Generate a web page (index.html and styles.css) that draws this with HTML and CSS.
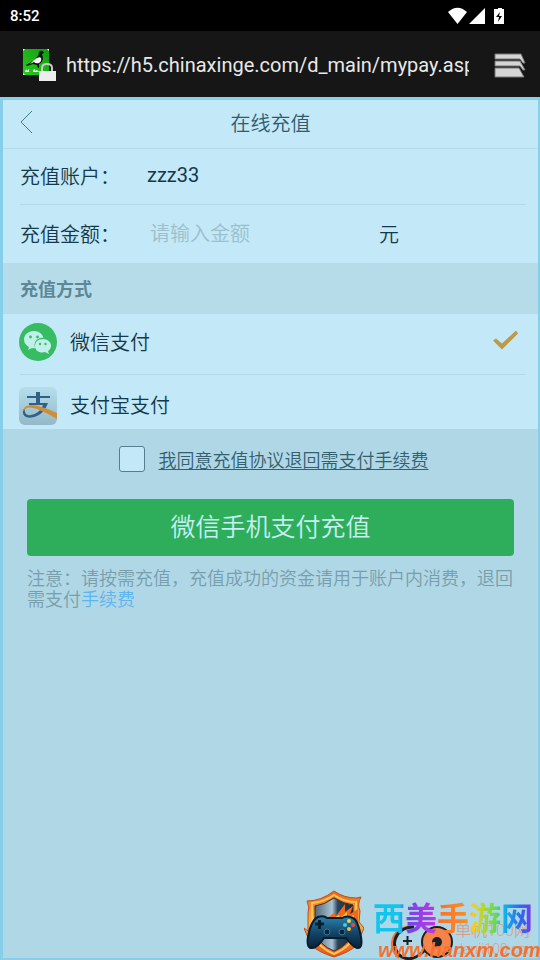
FILE: index.html
```html
<!DOCTYPE html>
<html lang="zh-CN">
<head>
  <meta charset="UTF-8">
  <meta name="viewport" content="width=device-width, initial-scale=1.0">
  <title>在线充值</title>
  <link rel="stylesheet" href="styles.css">
</head>
<body>
  <div class="status-bar">
    <span class="clock">8:52</span>
    <svg class="status-icons" viewBox="0 0 60 18" width="60" height="18" aria-hidden="true">
      <path fill="#fff" d="M0 5Q9.500 -3.500 19 5L9.500 17ZM21 17L37 1V17Z"/>
      <path fill="#fff" d="M48 2H50V1H54V2H56V17H46V2Z"/>
      <path fill="#000" d="M52 5L48 10H51L50 15L54 9H51Z"/>
    </svg>
  </div>

  <div class="address-bar">
    <svg class="favicon" viewBox="0 0 34 34" width="34" height="34" aria-hidden="true">
      <defs><linearGradient id="grass" x1="1" y1="0" x2="0" y2="1"><stop stop-color="#149a12"/><stop offset="1" stop-color="#27cc1d"/></linearGradient></defs>
      <rect x="1" y="1" width="26" height="26" fill="url(#grass)"/>
      <path fill="#fff" d="M1 1H3L1 3ZM25 1H27V3ZM1 25V27H3ZM4 21L5 23L7 21L7 24H3ZM11 22L13 21V23L15 22L17 24H11Z"/>
      <path fill="#0b170c" d="M17 4Q18 2 21 3L22 5L20 6Q21 9 21 11Q20 15 17 16L17 20H16L15 17L11 16L5 18L4 17L11 13L15 9Q17 7 17 4Z"/>
      <path fill="#fff" d="M12 12Q17 8 19 10Q20 13 17 15Q14 16 12 14L8 16Z"/>
      <path fill="none" stroke="#c5c9c8" stroke-width="2" d="M20 24V20Q20 16 25 16Q30 16 30 20V24"/>
      <path fill="#ededed" d="M17 23H34V33H17Z"/>
    </svg>
    <span class="url">https://h5.chinaxinge.com/d_main/mypay.asp</span>
    <button class="tabs" type="button" aria-label="标签页">
      <svg viewBox="0 0 32 25" width="32" height="25">
        <path fill="#d5d5d5" stroke="#777" d="M1 1H27L31 10H29L26 6H1ZM1 8H26L31 17H29L26 13H1ZM1 15H25L30 24H1Z"/>
      </svg>
    </button>
  </div>

  <main class="page">
    <header class="title-bar">
      <a class="back" href="#" aria-label="返回">
        <svg viewBox="0 0 14 24" width="14" height="24"><path fill="none" stroke="#47788a" d="M12 1L1 12L12 23"/></svg>
      </a>
      <h1>在线充值</h1>
    </header>

    <form>
      <div class="panel">
        <div class="row account">
          <span class="label">充值账户：</span>
          <span class="value">zzz33</span>
        </div>
        <div class="row amount">
          <label class="label" for="money">充值金额：</label>
          <input class="money" id="money" type="text" placeholder="请输入金额">
          <span>元</span>
        </div>
      </div>

      <h2 class="section-title">充值方式</h2>

      <div class="panel">
        <label class="row method">
          <svg class="pay-icon" viewBox="0 0 38 38" width="38" height="38" aria-hidden="true">
            <circle cx="19" cy="19" r="19" fill="#36bc62"/>
            <path fill="#c1f0ea" d="M15 8C9 8 5 12 5 16.500Q5 21 10 24L9 27L13 25Q14 25.500 16 25Q14 18 20 15.500Q22 14.500 24.500 15C23.500 11 20 8 15 8Z"/>
            <path fill="#c1f0ea" d="M24 16C19 16 16 19 16 23C16 27 19 29.500 23.500 29.500L26 29L30 31L29 28Q32 26 32 22.500C32 19 28.500 16 24 16Z"/>
            <g fill="#36bc62"><circle cx="11.500" cy="14" r="1.400"/><circle cx="18.500" cy="14" r="1.400"/><circle cx="21" cy="21" r="1.200"/><circle cx="26.500" cy="21" r="1.200"/></g>
          </svg>
          <span class="name">微信支付</span>
          <input type="radio" name="method" value="wechat" checked>
        </label>
        <label class="row method">
          <svg class="pay-icon" viewBox="0 0 38 38" width="38" height="38" aria-hidden="true">
            <defs><linearGradient id="tile" x2="0" y2="1"><stop stop-color="#b5deeb"/><stop offset="1" stop-color="#93b9c9"/></linearGradient></defs>
            <rect width="38" height="38" rx="6" fill="url(#tile)"/>
            <path fill="#315f87" d="M17 5H21V9H31V11H21V16H29Q26 24 20 28Q13 32 7 30Q3 28 4 23L6 21Q5 27 9 28Q14 29 19 25Q23 22 24 18H10V16H17V11H8V9H17Z"/>
            <path fill="#cf8e35" d="M4 24Q5 18 13 18Q20 18 38 26V32Q28 26 18 22Q7 18 5 24Z"/>
          </svg>
          <span class="name">支付宝支付</span>
          <input type="radio" name="method" value="alipay">
        </label>
      </div>

      <div class="agreement">
        <input id="agree" type="checkbox" aria-label="我同意充值协议">
        <a href="#">我同意充值协议退回需支付手续费</a>
      </div>

      <button class="submit" type="submit">微信手机支付充值</button>
      <p class="notice">注意：请按需充值，充值成功的资金请用于账户内消费，退回需支付<a href="#">手续费</a></p>
    </form>
  </main>

  <div class="watermark">
    <svg class="badge" viewBox="0 0 60 70" width="60" height="70" aria-hidden="true">
      <defs>
        <linearGradient id="flame" x2="0" y2="1"><stop stop-color="#e9661c"/><stop offset=".5" stop-color="#ffb43c"/><stop offset="1" stop-color="#e4511b"/></linearGradient>
        <linearGradient id="pad" x2="0" y2="1"><stop stop-color="#2684b1"/><stop offset=".5" stop-color="#154769"/><stop offset="1" stop-color="#0a2036"/></linearGradient>
        <linearGradient id="steel"><stop stop-color="#53697a"/><stop offset=".45" stop-color="#a9c4d3"/><stop offset=".6" stop-color="#27435a"/><stop offset="1" stop-color="#172f43"/></linearGradient>
      </defs>
      <path fill="url(#flame)" stroke="#c34a1c" d="M30 2Q40 9 52 9L57 8Q53 15 56 22L55 33L60 39L53 56Q46 63 30 68Q14 63 7 56L0 39L4 42L4 24Q6 18 3 12Q17 12 30 2Z"/>
      <path fill="none" stroke="#ffc554" stroke-width="2" d="M30 6Q40 13 52 13V43Q47 58 30 65Q13 58 8 43V14Q20 13 30 6Z"/>
      <path fill="url(#steel)" stroke="#3c2b2b" d="M30 9Q40 15 49 16V43Q45 56 30 62Q15 56 11 43V17Q20 16 30 9Z"/>
      <path fill="#f2671b" d="M22 30L30 24L32 27L41 15V23L49 17L46 25L54 20V34H20Z"/>
      <path fill="#ffc13b" d="M28 30L35 26L36 29L43 23V29L50 26V34H26Z"/>
      <path fill="url(#pad)" stroke="#061d32" stroke-width="2" d="M14 28Q20 26 23 29H38Q43 26 49 29Q54 31 57 48Q59 60 53 59Q49 58 42 49H20Q14 58 9 59Q2 60 4 48Q7 31 14 28Z"/>
      <path stroke="#071e32" stroke-width="3" d="M11 35H20M15.500 31V40"/>
      <g fill="#0c253b" stroke="#337b9e"><circle cx="23" cy="43" r="3"/><circle cx="38" cy="43" r="3"/></g>
      <circle cx="45" cy="32" r="2" fill="#ffcf37"/><circle cx="49" cy="36" r="2" fill="#f24a3a"/><circle cx="45" cy="40" r="2" fill="#efbd34"/><circle cx="41" cy="36" r="2" fill="#52c5d4"/>
    </svg>
    <div class="brand">
      <div class="old-mark">
        <svg viewBox="0 0 66 40" width="66" height="40" aria-hidden="true">
          <path fill="none" stroke="#f57332" stroke-width="2" d="M22 4C2 6 -3 26 10 36"/>
          <path fill="none" stroke="#172127" stroke-width="3" d="M25 5C4 5 0 27 13 35Q23 40 34 30L40 24"/>
          <path stroke="#172127" stroke-width="2" d="M14 19H23M18.500 14V23"/>
          <circle cx="48" cy="20" r="15" fill="#f5834a" stroke="#172127" stroke-width="2"/>
          <circle cx="48" cy="20" r="5" fill="#172127"/>
        </svg>
        <span>单机100网<br><small>danji100.com</small></span>
      </div>
      <div class="site-name">西美手游网</div>
      <div class="site-url">www.hanxm.com</div>
    </div>
  </div>
</body>
</html>
```
FILE: styles.css
```css
* {
  box-sizing: border-box;
}
body {
  margin: 0;
  min-height: 100vh;
  display: flex;
  flex-direction: column;
  font-family: Roboto, "Noto Sans CJK SC", sans-serif;
  font-size: 20px;
  font-weight: 350;
  color: #13394b;
  background: #b0d7e5;
}
button, input {
  font: inherit;
  color: inherit;
}
a {
  color: inherit;
}

/* phone chrome */
.status-bar {
  height: 31px;
  padding: 0 32px 0 10px;
  display: flex;
  align-items: center;
  justify-content: space-between;
  background: #000;
  color: #fff;
}
.clock {
  font-size: 15px;
  font-weight: 500;
}
.address-bar {
  height: 66px;
  padding: 2px 14px 0 22px;
  display: flex;
  align-items: center;
  background: #161616;
  color: #e8e8e8;
}
.favicon {
  flex: none;
  margin-right: 10px;
}
.url {
  flex: 1;
  min-width: 0;
  overflow: hidden;
  white-space: nowrap;
  font-weight: 400;
}
.tabs {
  margin-left: 25px;
  padding: 0;
  border: 0;
  background: none;
  display: flex;
}

/* page */
.page {
  flex: 1;
  border: solid #86cee9;
  border-width: 3px 2px 2px 3px;
}
.title-bar {
  height: 49px;
  padding: 0 17px 4px;
  display: grid;
  grid-template-columns: 14px 1fr 14px;
  align-items: center;
  background: #c3e8f7;
  border-bottom: 1px solid #b3dae8;
}
.back {
  display: flex;
}
h1 {
  margin: 0;
  text-align: center;
  font-size: 20px;
  font-weight: 350;
  color: #315b6c;
}
.panel {
  padding: 0 12px 0 17px;
  background: #c3e8f7;
}
.row {
  display: flex;
  align-items: center;
}
.row + .row {
  border-top: 1px solid #b5dae7;
}
.account {
  height: 55px;
  padding-bottom: 3px;
}
.value {
  font-weight: 400;
}
.amount {
  height: 59px;
  padding-bottom: 2px;
}
.label {
  width: 127px;
}
.money {
  width: 232px;
  padding: 2px 3px 0;
  border: 0;
  background: none;
  outline: none;
}
.money::placeholder {
  color: #9bbfcd;
  opacity: 1;
}
.section-title {
  height: 51px;
  margin: 0;
  padding: 3px 17px 0;
  font-size: 18px;
  line-height: 48px;
  font-weight: 700;
  color: #5d8796;
  background: #b6dce9;
}
.method {
  height: 60px;
  padding-bottom: 4px;
  gap: 13px;
}
.method + .method {
  height: 55px;
  padding: 7px 0 0;
}
.pay-icon {
  flex: none;
  margin-left: -1px;
}
.name {
  flex: 1;
  padding-bottom: 2px;
}
.method input {
  appearance: none;
  width: 26px;
  height: 20px;
  margin: 0 7px 3px 0;
}
.method input:checked {
  background: #bd9948;
  clip-path: polygon(0 10px, 3px 8px, 9px 13px, 23px 0, 25px 3px, 9px 19px);
}
.agreement {
  display: flex;
  justify-content: center;
  align-items: center;
  gap: 14px;
  margin-top: 17px;
  padding-left: 6px;
  font-size: 18px;
  color: #345f70;
}
.agreement input {
  appearance: none;
  width: 26px;
  height: 26px;
  margin: 0;
  border: 1px solid #557f91;
  border-radius: 3px;
  background: #c3e8f7;
}
.agreement input:checked {
  background: #2eae5a;
}
.agreement a {
  text-underline-offset: 2px;
}
.submit {
  display: block;
  width: calc(100% - 48px);
  height: 57px;
  margin: 27px 24px 0;
  padding: 0 0 6px;
  border: 0;
  border-radius: 4px;
  background: #2eae5a;
  color: #c7eff4;
  font-size: 25px;
}
.notice {
  margin: 12px 24px 0;
  font-size: 18px;
  line-height: 21px;
  color: #789eac;
}
.notice a {
  color: #5eb5ed;
  text-decoration: none;
}

/* corner watermark, lies over the page */
.watermark {
  position: fixed;
  right: 0;
  bottom: 0;
  display: flex;
  gap: 9px;
}
.brand {
  position: relative;
  width: 167px;
}
.site-name {
  position: relative;
  margin-top: 6px;
  font-size: 32px;
  line-height: 48px;
  font-weight: 700;
  background: linear-gradient(90deg, #12c5ef 16%, #6a48e8 20%, #c433eb 37%, #ff702b 40%, #fb8e24 56%, #f3cf24 60%, #5fdb55 74%, #10b7eb 78%, #2a6cf0 88%, #7938ef 95%);
  background-clip: text;
  color: transparent;
}
.site-url {
  position: relative;
  margin: -3px 0 0 5px;
  font-family: "Liberation Sans", sans-serif;
  font-size: 20px;
  line-height: 20px;
  font-style: italic;
  font-weight: 700;
  color: #f47031;
}
.old-mark {
  position: absolute;
  left: 16px;
  bottom: -2px;
  display: flex;
  color: #e09c83;
  font-size: 16px;
  line-height: 18px;
  white-space: nowrap;
}
.old-mark small {
  font-size: 14px;
}
```
